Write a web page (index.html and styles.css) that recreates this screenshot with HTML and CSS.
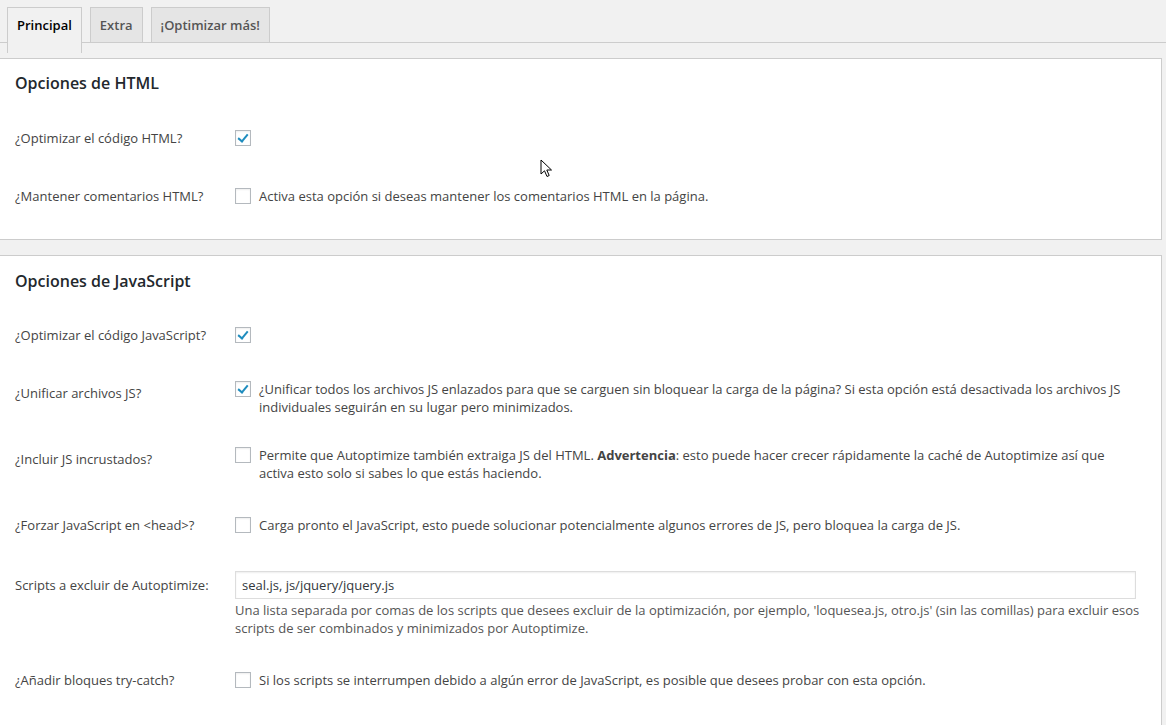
FILE: index.html
```html
<!DOCTYPE html>
<html>
<head>
    <meta charset="UTF-8">
    <title>Autoptimize</title>
    <link rel="stylesheet" href="styles.css">
</head>
<body>

    <div class="tabs">
        <a href="#" class="tab active">Principal</a>
        <a href="#" class="tab">Extra</a>
        <a href="#" class="tab">¡Optimizar más!</a>
    </div>

    <div class="panel">
        <h2>Opciones de HTML</h2>
        <div class="row">
            <div class="label">¿Optimizar el código HTML?</div>
            <div class="field single">
                <span class="check on"></span>
            </div>
        </div>
        <div class="row">
            <div class="label">¿Mantener comentarios HTML?</div>
            <div class="field single">
                <span class="check"></span>
                <span class="desc">Activa esta opción si deseas mantener los comentarios HTML en la página.</span>
            </div>
        </div>
    </div>

    <div class="panel long">
        <h2>Opciones de JavaScript</h2>
        <div class="row">
            <div class="label">¿Optimizar el código JavaScript?</div>
            <div class="field single">
                <span class="check on"></span>
            </div>
        </div>
        <div class="row">
            <div class="label">¿Unificar archivos JS?</div>
            <div class="field multi">
                <span class="check on"></span>
                <span class="desc">¿Unificar todos los archivos JS enlazados para que se carguen sin bloquear la carga de la página? Si esta opción está desactivada los archivos JS individuales seguirán en su lugar pero minimizados.</span>
            </div>
        </div>
        <div class="row">
            <div class="label">¿Incluir JS incrustados?</div>
            <div class="field multi">
                <span class="check"></span>
                <span class="desc">Permite que Autoptimize también extraiga JS del HTML. <b>Advertencia</b>: esto puede hacer crecer rápidamente la caché de Autoptimize así que activa esto solo si sabes lo que estás haciendo.</span>
            </div>
        </div>
        <div class="row">
            <div class="label">¿Forzar JavaScript en &lt;head&gt;?</div>
            <div class="field single">
                <span class="check"></span>
                <span class="desc">Carga pronto el JavaScript, esto puede solucionar potencialmente algunos errores de JS, pero bloquea la carga de JS.</span>
            </div>
        </div>
        <div class="row">
            <div class="label input-label">Scripts a excluir de Autoptimize:</div>
            <div class="field text">
                <input type="text" value="seal.js, js/jquery/jquery.js">
                <div class="note">Una lista separada por comas de los scripts que desees excluir de la optimización, por ejemplo, 'loquesea.js, otro.js' (sin las comillas) para excluir esos scripts de ser combinados y minimizados por Autoptimize.</div>
            </div>
        </div>
        <div class="row">
            <div class="label">¿Añadir bloques try-catch?</div>
            <div class="field single">
                <span class="check"></span>
                <span class="desc">Si los scripts se interrumpen debido a algún error de JavaScript, es posible que desees probar con esta opción.</span>
            </div>
        </div>
    </div>

    <svg class="cursor" width="14" height="20" viewBox="0 0 14 20">
        <path d="M1 1 L1 15 L4.5 11.8 L7 17.5 L9.2 16.5 L6.8 11 L11.5 11 Z" fill="#fff" stroke="#000" stroke-width="1" stroke-linejoin="round"/>
    </svg>

</body>
</html>
```

FILE: styles.css
```css
 body {
     font-family: "Open Sans", "Noto Sans", sans-serif;
     font-size: 13px;
     color: #444;
     background-color: #f1f1f1;
     margin: 0;
     padding: 0;
     position: relative;
     overflow: hidden;
 }
 .tabs {
     display: flex;
     gap: 8px;
     padding: 7px 0 0 7px;
     border-bottom: 1px solid #ccc;
     height: 35px;
 }
 .tab {
     display: block;
     padding: 5px 9px;
     line-height: 24px;
     font-size: 13px;
     font-weight: 600;
     color: #555;
     text-decoration: none;
     background-color: #e5e5e5;
     border: 1px solid #ccc;
     border-bottom: none;
 }
 .tab.active {
     background-color: #f1f1f1;
     color: #000;
     height: 35px;
 }
 .panel {
     background-color: #fff;
     border: 1px solid #ccc;
     border-left: none;
     width: 1162px;
     margin-top: 15px;
     padding: 0 0 14px 15px;
     box-sizing: border-box;
 }
 .panel.long {
     padding-bottom: 60px;
 }
 .panel h2 {
     margin: 0;
     padding: 13px 0 0;
     height: 37px;
     font-size: 16px;
     font-weight: 600;
     color: #23282d;
     line-height: 22px;
 }
 .panel.long h2 {
     padding-top: 14px;
     height: 36px;
 }
 .row {
     display: flex;
 }
 .label {
     width: 220px;
     flex-shrink: 0;
     padding: 20px 0;
     line-height: 18px;
 }
 .label.input-label {
     padding-top: 22px;
 }
 .field {
     display: flex;
     align-items: flex-start;
     width: 905px;
     line-height: 18px;
 }
 .field.single {
     padding: 20px 0;
 }
 .field.multi {
     padding: 16px 0 14px;
 }
 .field.text {
     display: block;
     padding: 17px 0 14px;
 }
 .check {
     width: 14px;
     height: 14px;
     border: 1px solid #b4b9be;
     background-color: #fff;
     box-shadow: inset 0 1px 2px rgba(0, 0, 0, 0.07);
     flex-shrink: 0;
     margin: 1px 8px 0 0;
     position: relative;
 }
 .check.on::after {
     content: "";
     position: absolute;
     left: 4px;
     top: 1px;
     width: 4px;
     height: 8px;
     border: solid #1e8cbe;
     border-width: 0 2.5px 2.5px 0;
     transform: rotate(40deg);
 }
 .desc {
     color: #444;
 }
 .desc b {
     font-weight: 700;
 }
 .field input {
     display: block;
     width: 901px;
     height: 28px;
     box-sizing: border-box;
     margin: 0 0 2px;
     padding: 3px 6px;
     font-family: inherit;
     font-size: 13px;
     color: #32373c;
     border: 1px solid #ddd;
     box-shadow: inset 0 1px 2px rgba(0, 0, 0, 0.07);
     outline: none;
 }
 .note {
     color: #555;
     width: 905px;
 }
 .cursor {
     position: absolute;
     left: 540px;
     top: 159px;
 }
```
